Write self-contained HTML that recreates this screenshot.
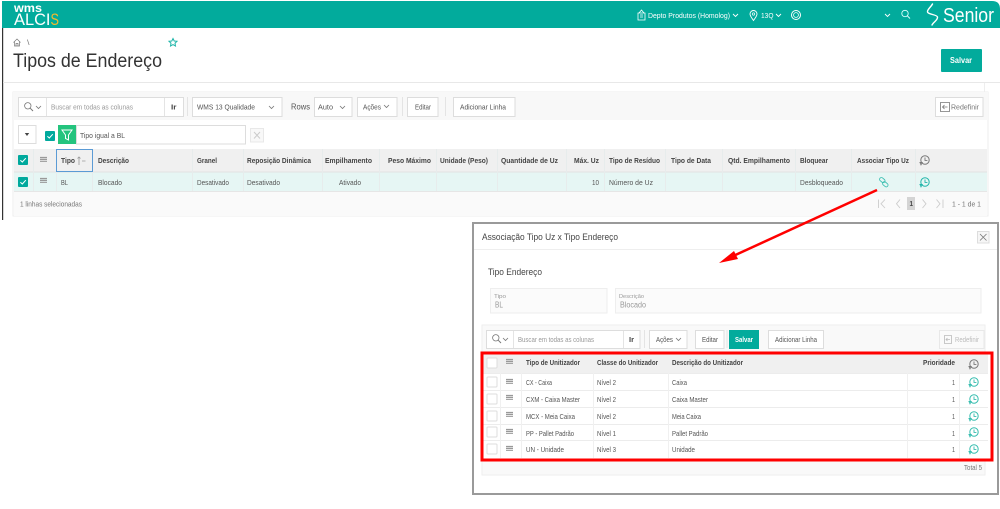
<!DOCTYPE html>
<html lang="pt-BR"><head><meta charset="utf-8"><title>Tipos de Endereço</title>
<style>
html,body{margin:0;padding:0;width:1000px;height:509px;overflow:hidden;background:#fff}
svg{display:block;filter:blur(.3px)}
text{font-family:"Liberation Sans",sans-serif;font-size:7.5px;fill:#555}
.h{font-weight:bold;fill:#444;font-size:7.5px}
.w{fill:#fff}
.m{fill:#777}
.l{fill:#999}
.b{fill:#fff;stroke:#ddd;stroke-width:1}
.s{stroke:#e4e4e4;stroke-width:1}
</style></head><body>
<svg xmlns="http://www.w3.org/2000/svg" width="1000" height="509" viewBox="0 0 1000 509">
<defs>
<g id="hist"><circle cx="5" cy="5" r="4.2" fill="none" stroke="currentColor" stroke-width="1"/><path d="M5 2.500V5.400H7.400M0 7.500L2.200 7.500 1 9.800Z" fill="none" stroke="currentColor" stroke-width=".9"/></g>
<g id="ham"><path d="M0 .5H7M0 2.400H7M0 4.300H7" stroke="#999" stroke-width="1.200"/></g>
<path id="chev" d="M0 0L2.500 2.500 5 0" fill="none" stroke="#777" stroke-width=".8"/>
<path id="chevw" d="M0 0L2.500 2.500 5 0" fill="none" stroke="#fff" stroke-width=".9"/>
<g id="mag"><circle cx="3.800" cy="3.800" r="3.200" fill="none" stroke="#777" stroke-width=".8"/><path d="M6.200 6.200L9 9" stroke="#777"/></g>
<g id="ck"><rect width="10" height="10" rx="1" fill="#fff" stroke="#ddd"/></g>
<g id="ckon"><rect width="10" height="10" rx="1" fill="#00a99d"/><path d="M2.400 5.200L4.300 7 7.800 3.200" fill="none" stroke="#fff" stroke-width="1"/></g>
</defs>

<!-- Cabeçalho -->
<path d="M2 1H992Q1000 1 1000 9V28H2Z" fill="#02ab9c"/>
<text class="w" lengthAdjust="spacingAndGlyphs" x="14" y="12" textLength="28" style="font-size:12px;font-weight:bold">wms</text>
<text class="w" lengthAdjust="spacingAndGlyphs" x="14" y="25" textLength="36.500" style="font-size:16.500px">ALCI</text>
<text lengthAdjust="spacingAndGlyphs" x="50.500" y="25" textLength="8.500" style="font-size:16.500px;fill:#f6b92b">S</text>
<path d="M638 13H645V20H638ZM639 13L641.500 10 644 13M640 15H643M640 17H643" fill="none" stroke="#fff" stroke-width=".8"/>
<text class="w" lengthAdjust="spacingAndGlyphs" x="648" y="18" textLength="82">Depto Produtos (Homolog)</text>
<use href="#chevw" x="733" y="14"/>
<path d="M753.500 20.500C751.500 17.500 750 16 750 14A3.500 3.500 0 0 1 757 14C757 16 755.500 17.500 753.500 20.500Z" fill="none" stroke="#fff" stroke-width=".9"/><circle cx="753.500" cy="14" r="1.200" fill="none" stroke="#fff" stroke-width=".7"/>
<text class="w" lengthAdjust="spacingAndGlyphs" x="761" y="18" textLength="12.500">13Q</text>
<use href="#chevw" x="776" y="14"/>
<circle cx="796" cy="15" r="4.500" fill="none" stroke="#fff"/><circle cx="796" cy="15" r="2.400" fill="none" stroke="#fff" stroke-width=".8"/>
<use href="#chevw" x="885" y="14"/>
<circle cx="905" cy="13.500" r="3.200" fill="none" stroke="#dff" stroke-width=".9"/><path d="M907.300 15.800L910 18.500" stroke="#dff"/>
<path d="M932.500 4C931 7 927 9.500 927.500 12C928 14.500 937 14.500 937.500 17C938 20 933.500 22 932 25" fill="none" stroke="#fff" stroke-width="1.400" stroke-linecap="round"/>
<text class="w" lengthAdjust="spacingAndGlyphs" x="943" y="22" textLength="51" style="font-size:20px">Senior</text>

<!-- Linha esquerda -->
<rect x="2" y="28" width="1.200" height="192" fill="#333"/>

<!-- Título -->
<path d="M13.500 42.500L17 39 20.500 42.500M14.500 41.500V46H19.500V41.500M16 46V43.500H18V46" fill="none" stroke="#777" stroke-width=".7"/>
<text class="m" lengthAdjust="spacingAndGlyphs" x="27" y="45" textLength="2.500">\</text>
<path d="M173 38.500L174.200 41 177 41.300 175 43.200 175.500 46 173 44.600 170.500 46 171 43.200 169 41.300 171.800 41Z" fill="none" stroke="#1fb5a9"/>
<text lengthAdjust="spacingAndGlyphs" x="13" y="67" textLength="149" style="font-size:19px;fill:#333">Tipos de Endereço</text>
<rect x="941" y="49" width="41" height="23" rx="1" fill="#02ab9c"/>
<text class="w" lengthAdjust="spacingAndGlyphs" x="950" y="63" textLength="22" style="font-weight:bold;font-size:8px">Salvar</text>
<rect x="3" y="82" width="997" height="1" fill="#e8e8e8"/>
<rect x="984" y="83" width="1" height="9" fill="#eee"/>

<!-- Barra -->
<rect x="13" y="92" width="975" height="124" fill="#fff" stroke="#eee"/>
<rect x="13" y="92" width="975" height="28" fill="#f8f8f8"/>
<rect x="18.500" y="97.500" width="165" height="19" class="b"/>
<use href="#mag" x="24" y="102"/><use href="#chev" x="36" y="106"/>
<path d="M46.500 98V116M164.500 98V116" class="s"/>
<text class="l" lengthAdjust="spacingAndGlyphs" x="51" y="109.500" textLength="82">Buscar em todas as colunas</text>
<text class="h" lengthAdjust="spacingAndGlyphs" x="171" y="109.500" textLength="5.500">Ir</text>
<path d="M187.500 97V116M402.500 97V116M445.500 97V116" class="s"/>
<rect x="192.500" y="97.500" width="89.500" height="19" class="b"/>
<text lengthAdjust="spacingAndGlyphs" x="197" y="109.500" textLength="58">WMS 13 Qualidade</text>
<use href="#chev" x="269" y="106"/>
<text lengthAdjust="spacingAndGlyphs" x="291" y="109.500" textLength="19" style="font-size:8.500px">Rows</text>
<rect x="314.500" y="97.500" width="37.500" height="19" class="b"/>
<text lengthAdjust="spacingAndGlyphs" x="318" y="109.500" textLength="15">Auto</text>
<use href="#chev" x="340" y="106"/>
<rect x="357.500" y="97.500" width="39.500" height="19" class="b"/>
<text lengthAdjust="spacingAndGlyphs" x="363" y="109.500" textLength="18">Ações</text>
<use href="#chev" x="384" y="105"/>
<rect x="407.500" y="97.500" width="30.500" height="19" class="b"/>
<text lengthAdjust="spacingAndGlyphs" x="415" y="109.500" textLength="16">Editar</text>
<rect x="453.500" y="97.500" width="61.500" height="19" class="b"/>
<text lengthAdjust="spacingAndGlyphs" x="460" y="109.500" textLength="46">Adicionar Linha</text>
<rect x="935.500" y="97.500" width="47.500" height="19" class="b"/>
<path d="M940.500 102.500H949.500V111.500H940.500ZM947.500 107H942.500M944.500 105L942.500 107 944.500 109" fill="none" stroke="#777" stroke-width=".8"/>
<text class="m" lengthAdjust="spacingAndGlyphs" x="951" y="109.500" textLength="28">Redefinir</text>

<!-- Filtro -->
<rect x="18.500" y="125.500" width="17.500" height="18" class="b"/>
<path d="M24.800 133H29.200L27 136Z" fill="#444"/>
<use href="#ckon" x="45" y="131"/>
<rect x="58" y="125" width="18" height="19" fill="#24c47e"/>
<path d="M62 130H72L68.500 135V140L65.500 138.500V135Z" fill="none" stroke="#fff" stroke-width="1"/>
<rect x="76.500" y="125.500" width="169" height="18.500" class="b"/>
<text lengthAdjust="spacingAndGlyphs" x="80" y="138" textLength="45">Tipo igual a BL</text>
<rect x="250.500" y="128.500" width="13" height="13.500" fill="#f8f8f8" stroke="#e8e8e8"/>
<path d="M254 132L260 138.500M260 132L254 138.500" stroke="#ccc"/>

<!-- Grade principal -->
<rect x="14" y="149" width="973" height="23" fill="#f0f0f0"/>
<rect x="14" y="172" width="973" height="19" fill="#e6f6f4"/>
<rect x="14" y="191" width="973" height="25" fill="#fafafa"/>
<rect x="14" y="191" width="973" height="1" fill="#e6e6e6"/>
<rect x="14" y="171.500" width="973" height="1" fill="#e2e2e2"/>
<path d="M33.500 149V191M56.500 149V191M92.500 149V191M192.500 149V191M243.500 149V191M322.500 149V191M379.500 149V191M436.500 149V191M497.500 149V191M566.500 149V191M604.500 149V191M665.500 149V191M722.500 149V191M795.500 149V191M851.500 149V191M915.500 149V191" stroke="#e7ecec" stroke-width="1"/>
<rect x="56.500" y="149.500" width="36" height="22" fill="#f0f0f0" stroke="#5b9bd5"/>
<use href="#ckon" x="18" y="155"/><use href="#ckon" x="18" y="177"/>
<use href="#ham" x="40" y="157"/><use href="#ham" x="40" y="178"/>
<text class="h" lengthAdjust="spacingAndGlyphs" x="61" y="163" textLength="14">Tipo</text>
<path d="M79 165V157M77.500 158.500L79 157 80.500 158.500M82 161H85.500" fill="none" stroke="#999" stroke-width=".8"/>
<text class="h" lengthAdjust="spacingAndGlyphs" x="98" y="163" textLength="31">Descrição</text>
<text class="h" lengthAdjust="spacingAndGlyphs" x="197" y="163" textLength="20">Granel</text>
<text class="h" lengthAdjust="spacingAndGlyphs" x="247" y="163" textLength="64">Reposição Dinâmica</text>
<text class="h" lengthAdjust="spacingAndGlyphs" x="325" y="163" textLength="47">Empilhamento</text>
<text class="h" lengthAdjust="spacingAndGlyphs" x="388" y="163" textLength="43">Peso Máximo</text>
<text class="h" lengthAdjust="spacingAndGlyphs" x="440" y="163" textLength="48">Unidade (Peso)</text>
<text class="h" lengthAdjust="spacingAndGlyphs" x="501" y="163" textLength="57">Quantidade de Uz</text>
<text class="h" lengthAdjust="spacingAndGlyphs" x="574" y="163" textLength="25">Máx. Uz</text>
<text class="h" lengthAdjust="spacingAndGlyphs" x="609" y="163" textLength="51">Tipo de Resíduo</text>
<text class="h" lengthAdjust="spacingAndGlyphs" x="671" y="163" textLength="40">Tipo de Data</text>
<text class="h" lengthAdjust="spacingAndGlyphs" x="728" y="163" textLength="62">Qtd. Empilhamento</text>
<text class="h" lengthAdjust="spacingAndGlyphs" x="800" y="163" textLength="28">Bloquear</text>
<text class="h" lengthAdjust="spacingAndGlyphs" x="857" y="163" textLength="52">Associar Tipo Uz</text>
<use href="#hist" x="920" y="155" color="#777"/>
<text lengthAdjust="spacingAndGlyphs" x="61" y="185" textLength="7">BL</text>
<text lengthAdjust="spacingAndGlyphs" x="98" y="185" textLength="24">Blocado</text>
<text lengthAdjust="spacingAndGlyphs" x="197" y="185" textLength="32">Desativado</text>
<text lengthAdjust="spacingAndGlyphs" x="247" y="185" textLength="33">Desativado</text>
<text lengthAdjust="spacingAndGlyphs" x="339" y="185" textLength="22">Ativado</text>
<text lengthAdjust="spacingAndGlyphs" x="592" y="185" textLength="7">10</text>
<text lengthAdjust="spacingAndGlyphs" x="609" y="185" textLength="44">Número de Uz</text>
<text lengthAdjust="spacingAndGlyphs" x="800" y="185" textLength="43">Desbloqueado</text>
<rect x="879.300" y="178.300" width="6" height="3.600" rx="1.800" transform="rotate(40 882.300 180.100)" fill="none" stroke="#3dbfb2" stroke-width=".9"/>
<rect x="882.300" y="182.500" width="6" height="3.600" rx="1.800" transform="rotate(40 885.300 184.300)" fill="none" stroke="#3dbfb2" stroke-width=".9"/>
<use href="#hist" x="920" y="177" color="#1fb5a9"/>
<text class="m" lengthAdjust="spacingAndGlyphs" x="20" y="206.500" textLength="62">1 linhas selecionadas</text>
<path d="M878.500 199.500V208M885 199.500L881 203.800 885 208M900 199.500L896.500 203.800 900 208M922.500 199.500L926 203.800 922.500 208M936.500 199.500L940 203.800 936.500 208M943 199.500V208" fill="none" stroke="#ccc" stroke-width=".9"/>
<rect x="907" y="197" width="8" height="13" fill="#d4d4d4"/>
<text class="h" lengthAdjust="spacingAndGlyphs" x="909.500" y="206" textLength="3.500">1</text>
<text class="m" lengthAdjust="spacingAndGlyphs" x="952" y="206.500" textLength="29">1 - 1 de 1</text>

<!-- Modal -->
<rect x="473" y="223" width="525" height="271" fill="#fff" stroke="#9a9a9a" stroke-width="2"/>
<rect x="474" y="249" width="523" height="1" fill="#eee"/>
<text lengthAdjust="spacingAndGlyphs" x="482" y="240" textLength="136" style="font-size:9px;fill:#444">Associação Tipo Uz x Tipo Endereço</text>
<rect x="977.500" y="231.500" width="11.500" height="11.500" fill="#f6f6f6" stroke="#ddd"/>
<path d="M980 234L986.500 240.500M986.500 234L980 240.500" stroke="#777" stroke-width=".8"/>
<text lengthAdjust="spacingAndGlyphs" x="488" y="275" textLength="54" style="font-size:9px;fill:#444">Tipo Endereço</text>
<rect x="490.500" y="288.500" width="116.500" height="24.500" fill="#fbfbfb" stroke="#eee"/>
<rect x="615.500" y="288.500" width="365.500" height="24.500" fill="#fbfbfb" stroke="#eee"/>
<text class="l" lengthAdjust="spacingAndGlyphs" x="494" y="298" textLength="12" style="font-size:5.500px">Tipo</text>
<text class="l" lengthAdjust="spacingAndGlyphs" x="495" y="307.500" textLength="8" style="font-size:8px">BL</text>
<text class="l" lengthAdjust="spacingAndGlyphs" x="619" y="298" textLength="25" style="font-size:5.500px">Descrição</text>
<text class="l" lengthAdjust="spacingAndGlyphs" x="620" y="307.500" textLength="26" style="font-size:8px">Blocado</text>

<rect x="482" y="325" width="503" height="150" fill="#f9f9f9" stroke="#eee"/>
<rect x="486.500" y="330.500" width="153.500" height="18" class="b"/>
<path d="M513.500 331V348M623.500 331V348M644.500 330V348M727 330V348" class="s"/>
<use href="#mag" x="492" y="334"/><use href="#chev" x="503" y="338"/>
<text class="l" lengthAdjust="spacingAndGlyphs" x="518" y="342" textLength="76">Buscar em todas as colunas</text>
<text class="h" lengthAdjust="spacingAndGlyphs" x="629" y="342" textLength="5">Ir</text>
<rect x="649.500" y="330.500" width="37.500" height="18" class="b"/>
<text lengthAdjust="spacingAndGlyphs" x="656" y="342" textLength="17">Ações</text><use href="#chev" x="676" y="338"/>
<rect x="695.500" y="330.500" width="28.500" height="18" class="b"/>
<text lengthAdjust="spacingAndGlyphs" x="702" y="342" textLength="16">Editar</text>
<rect x="729" y="330" width="30" height="19" fill="#02ab9c"/>
<text class="w" lengthAdjust="spacingAndGlyphs" x="735" y="342" textLength="18" style="font-weight:bold">Salvar</text>
<rect x="768.500" y="330.500" width="55" height="18" class="b"/>
<text lengthAdjust="spacingAndGlyphs" x="775" y="342" textLength="42">Adicionar Linha</text>
<rect x="939.500" y="330.500" width="44.500" height="18" fill="#fafafa" stroke="#e8e8e8"/>
<path d="M944.500 335.500H951.500V343.500H944.500ZM950 339.500H946M947.500 338L946 339.500 947.500 341" fill="none" stroke="#bbb" stroke-width=".8"/>
<text lengthAdjust="spacingAndGlyphs" x="955" y="342" textLength="24" style="fill:#bbb">Redefinir</text>

<rect x="483" y="354" width="509" height="105" fill="#fff"/>
<rect x="483" y="354" width="505" height="19.500" fill="#f0f0f0"/>
<path d="M483 373.500H988M483 390.500H988M483 407.500H988M483 424.500H988M483 440.500H988" stroke="#ececec"/>
<path d="M500.500 354V458M521.500 354V458M593.500 354V458M668.500 354V458M907.500 354V458M959.500 354V458" stroke="#f0f0f0"/>
<use href="#ck" x="487" y="358"/><use href="#ham" x="506" y="359"/>
<text class="h" lengthAdjust="spacingAndGlyphs" x="526" y="365" textLength="54">Tipo de Unitizador</text>
<text class="h" lengthAdjust="spacingAndGlyphs" x="597" y="365" textLength="61">Classe do Unitizador</text>
<text class="h" lengthAdjust="spacingAndGlyphs" x="672" y="365" textLength="71">Descrição do Unitizador</text>
<text class="h" lengthAdjust="spacingAndGlyphs" x="923" y="365" textLength="32">Prioridade</text>
<use href="#hist" x="969" y="359" color="#777"/>

<use href="#ck" x="487" y="377"/><use href="#ham" x="506" y="379"/>
<text lengthAdjust="spacingAndGlyphs" x="526" y="385" textLength="26">CX - Caixa</text><text lengthAdjust="spacingAndGlyphs" x="597" y="385" textLength="19">Nível 2</text><text lengthAdjust="spacingAndGlyphs" x="672" y="385" textLength="15">Caixa</text><text lengthAdjust="spacingAndGlyphs" x="952" y="385" textLength="3">1</text><use href="#hist" x="969" y="377" color="#35bcae"/>

<use href="#ck" x="487" y="394"/><use href="#ham" x="506" y="395"/>
<text lengthAdjust="spacingAndGlyphs" x="526" y="402" textLength="54">CXM - Caixa Master</text><text lengthAdjust="spacingAndGlyphs" x="597" y="402" textLength="19">Nível 2</text><text lengthAdjust="spacingAndGlyphs" x="672" y="402" textLength="36">Caixa Master</text><text lengthAdjust="spacingAndGlyphs" x="952" y="402" textLength="3">1</text><use href="#hist" x="969" y="394" color="#35bcae"/>

<use href="#ck" x="487" y="411"/><use href="#ham" x="506" y="412"/>
<text lengthAdjust="spacingAndGlyphs" x="526" y="419" textLength="49">MCX - Meia Caixa</text><text lengthAdjust="spacingAndGlyphs" x="597" y="419" textLength="19">Nível 2</text><text lengthAdjust="spacingAndGlyphs" x="672" y="419" textLength="29">Meia Caixa</text><text lengthAdjust="spacingAndGlyphs" x="952" y="419" textLength="3">1</text><use href="#hist" x="969" y="411" color="#35bcae"/>

<use href="#ck" x="487" y="427"/><use href="#ham" x="506" y="429"/>
<text lengthAdjust="spacingAndGlyphs" x="526" y="436" textLength="48">PP - Pallet Padrão</text><text lengthAdjust="spacingAndGlyphs" x="597" y="436" textLength="19">Nível 1</text><text lengthAdjust="spacingAndGlyphs" x="672" y="436" textLength="36">Pallet Padrão</text><text lengthAdjust="spacingAndGlyphs" x="952" y="436" textLength="3">1</text><use href="#hist" x="969" y="427" color="#35bcae"/>

<use href="#ck" x="487" y="444"/><use href="#ham" x="506" y="446"/>
<text lengthAdjust="spacingAndGlyphs" x="526" y="452" textLength="38">UN - Unidade</text><text lengthAdjust="spacingAndGlyphs" x="597" y="452" textLength="19">Nível 3</text><text lengthAdjust="spacingAndGlyphs" x="672" y="452" textLength="23">Unidade</text><text lengthAdjust="spacingAndGlyphs" x="952" y="452" textLength="3">1</text><use href="#hist" x="969" y="444" color="#35bcae"/>

<rect x="482" y="353" width="510" height="107" fill="none" stroke="#f00" stroke-width="3"/>
<text class="m" lengthAdjust="spacingAndGlyphs" x="964" y="470" textLength="18">Total 5</text>

<!-- Seta -->
<path d="M877 190L731 257" stroke="#f00" stroke-width="2.500" fill="none"/>
<path d="M719 263L734 251 738 259Z" fill="#f00"/>
</svg>
</body></html>
